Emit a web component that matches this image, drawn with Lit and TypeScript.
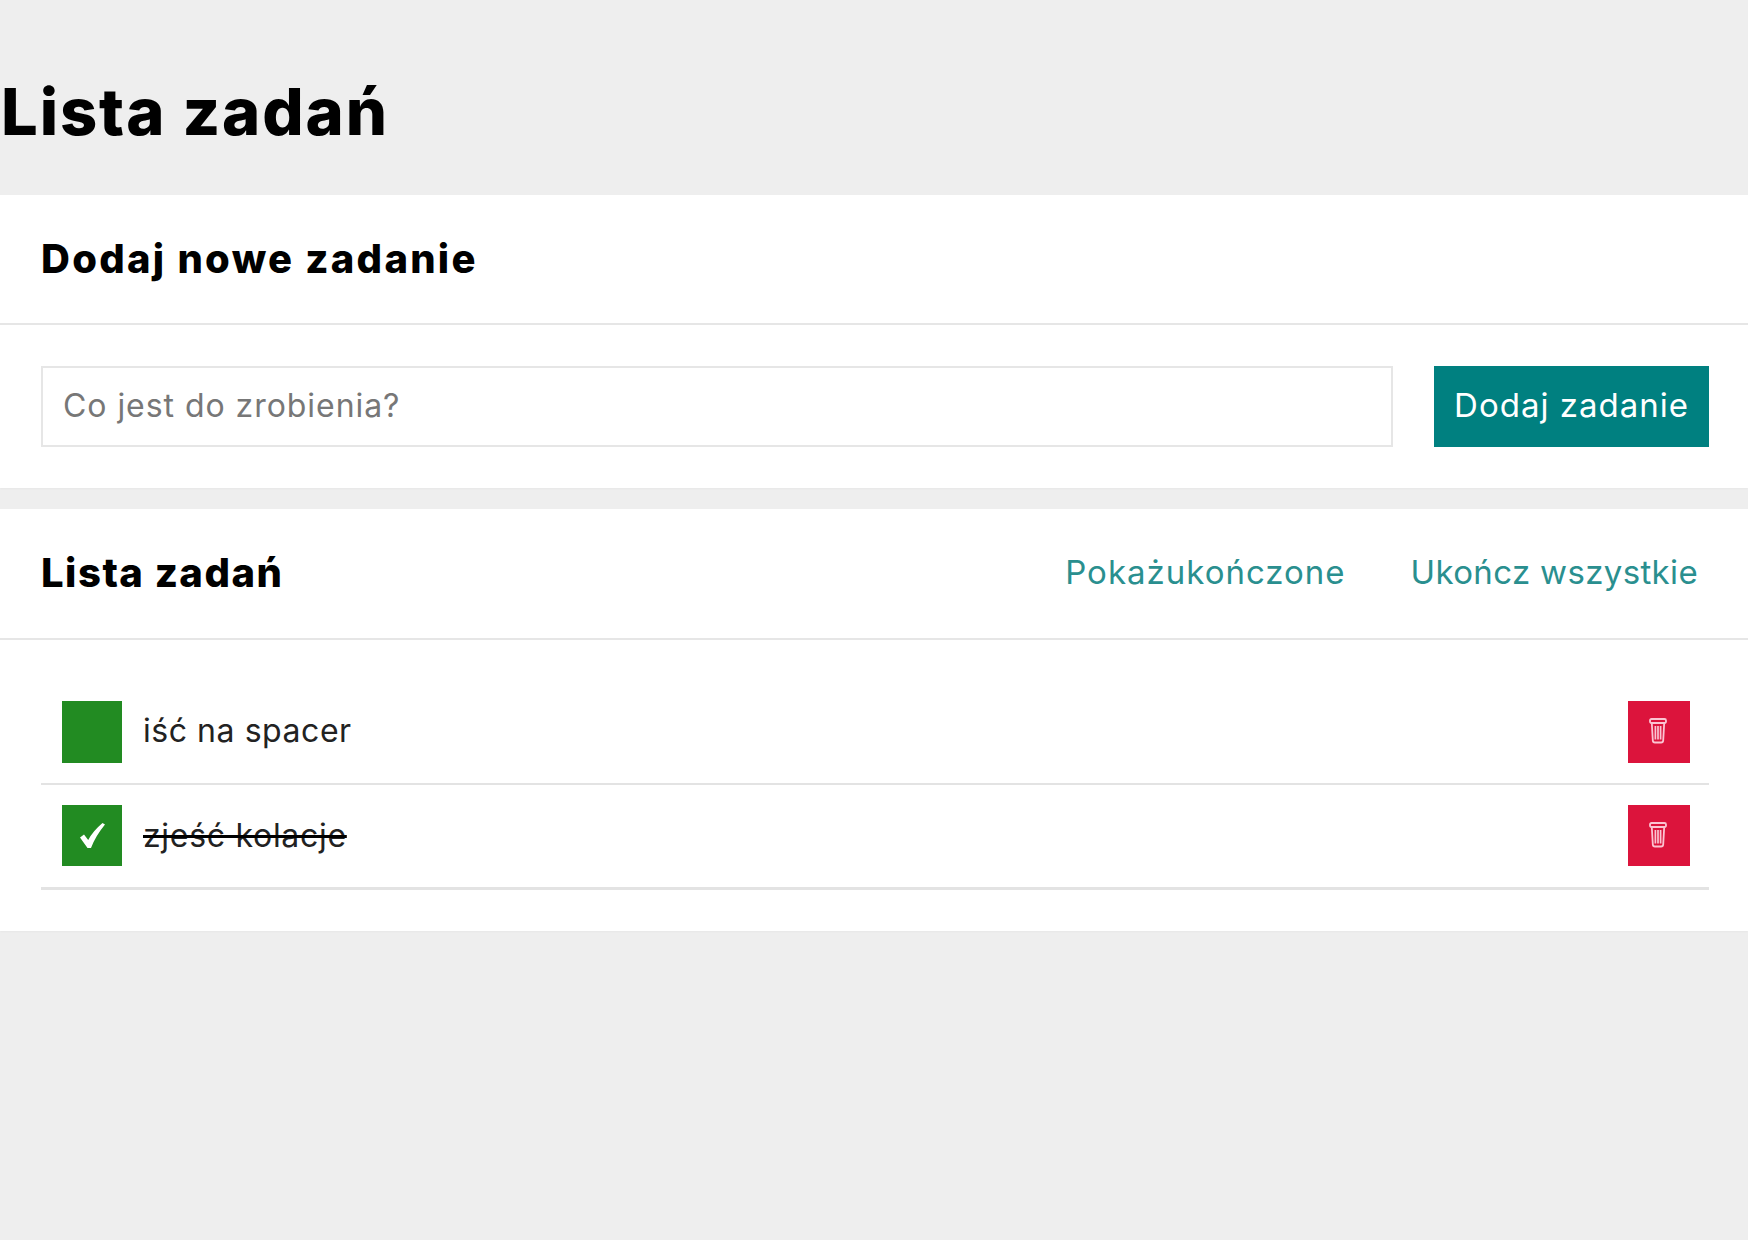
import { LitElement, html, css } from "lit";
import { customElement } from "lit/decorators.js";

const trash = html`<svg class="trash" viewBox="0 0 18 27" fill="none" stroke="#fbc4d2" aria-hidden="true">
  <path d="M2.500 2h13q1.500 0 1.500 1.500v1q0 1.500-1.500 1.500h-13q-1.500 0-1.500-1.500v-1q0-1.500 1.500-1.500z" stroke-width="1.800"/>
  <path d="M2.800 6l1 17.500q.1 2 2.100 2h6.200q2 0 2.100-2l1-17.500" stroke-width="1.800"/>
  <path d="M6.400 9v13.500M9 9v13.500M11.600 9v13.500" stroke-width="1.700"/>
</svg>`;

@customElement("app-root")
export class AppRoot extends LitElement {
  static styles = css`
    :host { display: block; min-height: 1240px; background: #eeeeee; color: #000; font-family: Inter, "Liberation Sans", sans-serif; }
    * { box-sizing: border-box; }
    .page-head { height: 195px; display: flex; align-items: center; padding-top: 28px; }
    h1 { margin: 0; padding-left: 1px; font-size: 65px; line-height: 1; font-weight: 800; letter-spacing: 1.900px; }
    .card { background: #fff; box-shadow: 0 1px 2px rgba(0,0,0,.03); }
    .card + .card { margin-top: 21px; }
    .card-head { height: 131px; border-bottom: 2px solid #e6e6e6; padding: 0 50px 3px 41px; display: flex; align-items: center; justify-content: space-between; }
    .card-add .card-head { height: 130px; padding-bottom: 1px; }
    h2 { margin: 0; font-size: 40px; font-weight: 800; line-height: 1; }
    .h-add { letter-spacing: 2.270px; }
    .h-list { letter-spacing: 1.500px; padding-top: 2px; }
    .form { display: flex; gap: 41px; padding: 41px 39px 41px 41px; }
    .input { flex: 1; height: 81px; border: 2px solid #e6e6e6; padding: 0 20px 3px; font-size: 32px; letter-spacing: 0.950px; color: #777; display: flex; align-items: center; }
    .btn { width: 275px; height: 81px; padding-bottom: 4px; background: #008080; color: #fff; font-size: 33px; letter-spacing: 1px; display: flex; align-items: center; justify-content: center; }
    .links { display: flex; gap: 65px; color: #2a8f8f; font-size: 33px; }
    .l-show { letter-spacing: 1px; }
    .l-all { letter-spacing: 0.350px; }
    .list { padding: 41px 39px 41px 41px; }
    .item { display: flex; align-items: flex-start; justify-content: space-between; padding: 20px 19.500px 20px 21px; border-bottom: 2px solid #e3e3e3; }
    .item.last { padding-bottom: 21px; border-bottom-width: 3px; }
    .left { display: flex; align-items: center; gap: 21px; font-size: 32px; color: #222; }
    .t-a { letter-spacing: 0.550px; padding-bottom: 3px; }
    .t-b { letter-spacing: 0.700px; text-decoration: line-through; text-decoration-color: #000; }
    .box { width: 60px; height: 62px; background: #228b22; display: flex; align-items: center; justify-content: center; }
    .last .box { height: 61px; }
    .box svg { width: 25px; height: 25px; }
    .del { width: 62px; height: 62px; background: #dc143c; display: flex; align-items: center; justify-content: center; }
    .last .del { height: 61px; }
    .trash { width: 18px; height: 27px; margin: 0 2px 3px 0; }
  `;

  render() {
    return html`
      <div class="page-head"><h1>Lista zadań</h1></div>
      <section class="card card-add">
        <div class="card-head"><h2 class="h-add">Dodaj nowe zadanie</h2></div>
        <div class="form">
          <div class="input">Co jest do zrobienia?</div>
          <div class="btn">Dodaj zadanie</div>
        </div>
      </section>
      <section class="card">
        <div class="card-head">
          <h2 class="h-list">Lista zadań</h2>
          <div class="links"><span class="l-show">Pokażukończone</span><span class="l-all">Ukończ wszystkie</span></div>
        </div>
        <div class="list">
          <div class="item">
            <div class="left"><div class="box"></div><span class="t-a">iść na spacer</span></div>
            <div class="del">${trash}</div>
          </div>
          <div class="item last">
            <div class="left">
              <div class="box"><svg viewBox="0 0 25 25" fill="#fff" aria-hidden="true"><path d="M0 14.500L4 11.500L8.200 17Q13 8 22.500 0L25 1.500Q15.500 13 11 25H7.500Z"/></svg></div>
              <span class="t-b">zjeść kolacje</span>
            </div>
            <div class="del">${trash}</div>
          </div>
        </div>
      </section>
    `;
  }
}
